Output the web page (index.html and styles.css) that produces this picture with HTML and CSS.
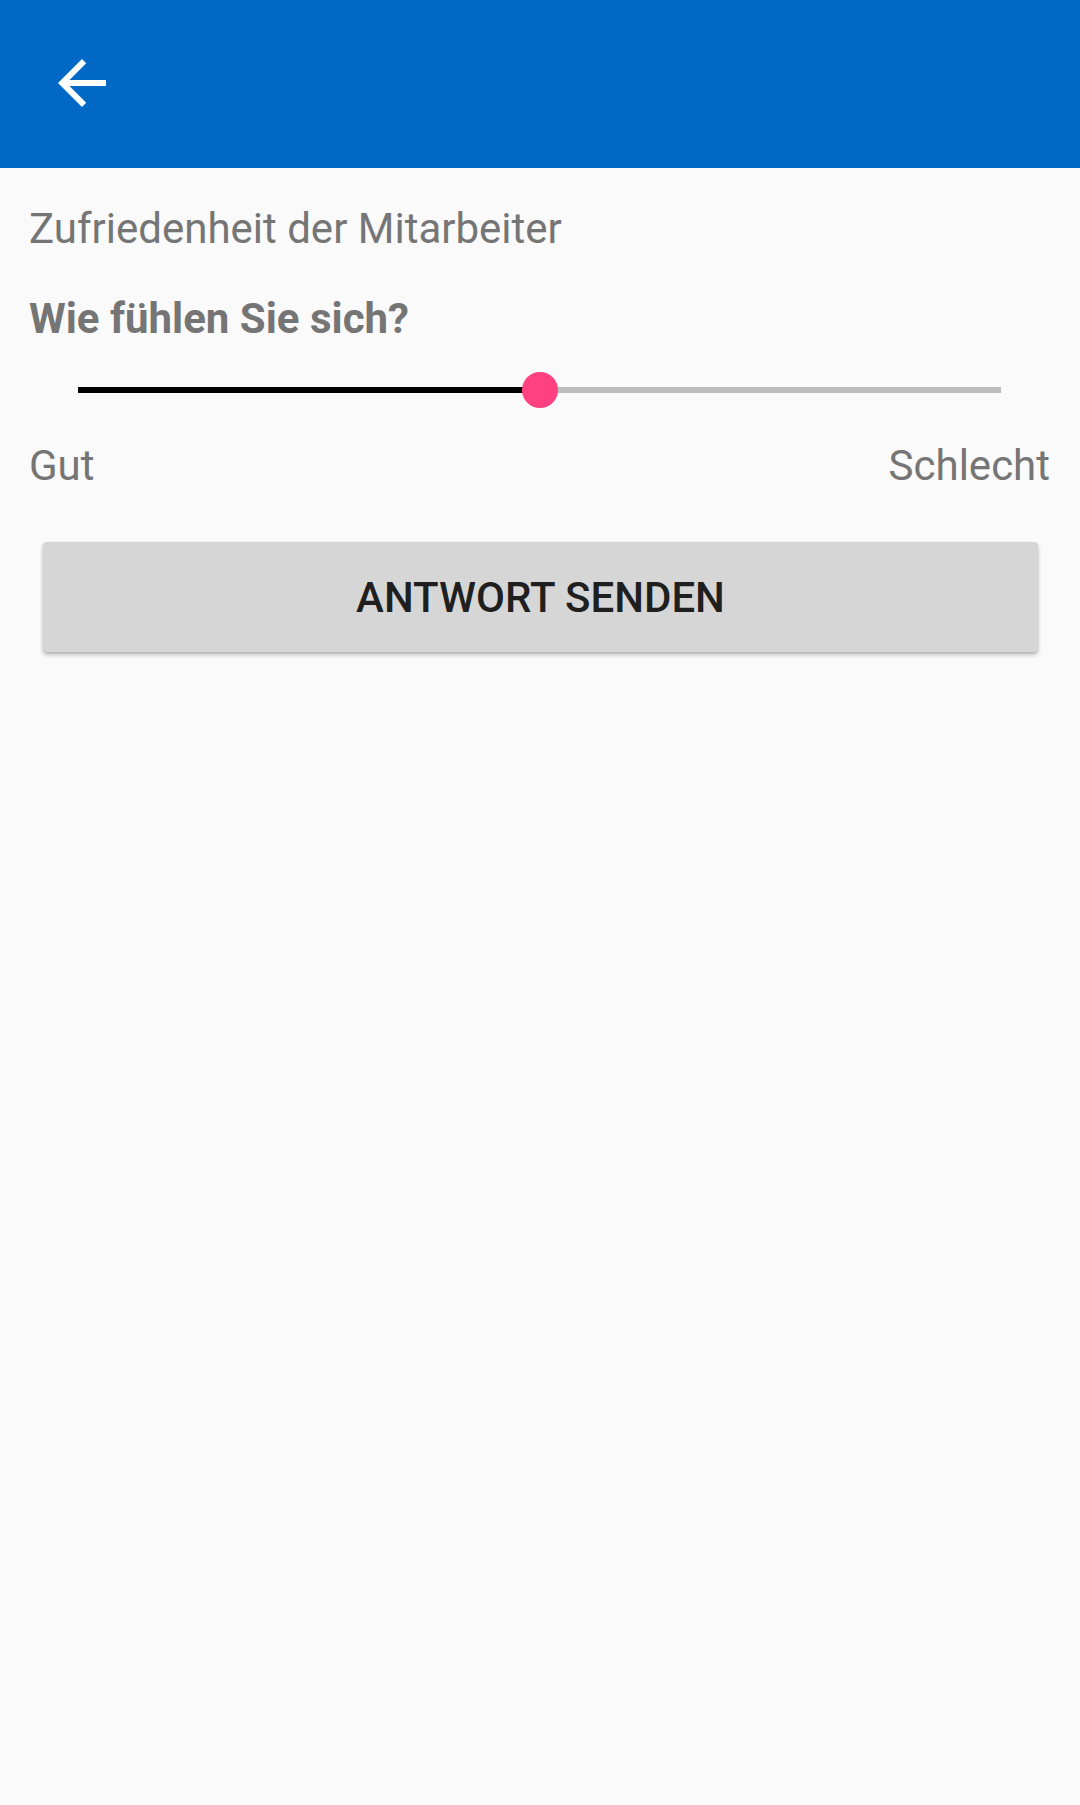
FILE: index.html
```html
<!DOCTYPE html>
<html lang="de">
<head>
<meta charset="utf-8">
<title>Zufriedenheit der Mitarbeiter</title>
<link rel="stylesheet" href="styles.css">
</head>
<body>
  <header class="appbar">
    <button class="back" aria-label="Zurück">
      <svg class="back-icon" viewBox="0 0 24 24" width="72" height="72" aria-hidden="true">
        <path d="M20 11H7.83l5.59-5.59L12 4l-8 8 8 8 1.41-1.41L7.83 13H20v-2z" fill="#ffffff"/>
      </svg>
    </button>
  </header>
  <main class="content">
    <h1 class="title">Zufriedenheit der Mitarbeiter</h1>
    <h2 class="question">Wie fühlen Sie sich?</h2>
    <div class="slider">
      <div class="track">
        <div class="track-fill" style="width: 50%"></div>
        <div class="thumb" style="left: 50%"></div>
      </div>
    </div>
    <div class="labels">
      <span class="label">Gut</span>
      <span class="label">Schlecht</span>
    </div>
    <div class="actions">
      <button class="submit">ANTWORT SENDEN</button>
    </div>
  </main>
</body>
</html>
```

FILE: styles.css
```css
* {
  box-sizing: border-box;
}

html, body {
  margin: 0;
  padding: 0;
}

body {
  width: 1080px;
  height: 1805px;
  background: #fafafa;
  font-family: Roboto, "Noto Sans", "Liberation Sans", sans-serif;
  overflow: hidden;
}

.appbar {
  height: 168px;
  background: #0069c5;
  display: flex;
  align-items: center;
  padding-left: 46px;
}

.back {
  border: 0;
  padding: 0;
  background: none;
  width: 72px;
  height: 72px;
  display: flex;
  margin-top: -3px;
}

.back-icon {
  display: block;
}

.content {
  padding: 33px 30px 0 29px;
  display: flex;
  flex-direction: column;
}

.title {
  margin: 0;
  font-size: 42px;
  line-height: 56px;
  font-weight: 400;
  color: #757575;
}

.question {
  margin: 34px 0 0;
  font-size: 42px;
  line-height: 56px;
  font-weight: 700;
  color: #757575;
}

.slider {
  margin-top: 19px;
  height: 48px;
  display: flex;
  align-items: center;
  padding: 0 49px;
}

.track {
  position: relative;
  flex: 1;
  height: 6px;
  background: #bdbdbd;
}

.track-fill {
  height: 100%;
  background: #000000;
}

.thumb {
  position: absolute;
  top: 50%;
  width: 36px;
  height: 36px;
  margin: -18px 0 0 -18px;
  border-radius: 50%;
  background: #ff4081;
}

.labels {
  margin-top: 24px;
  display: flex;
  justify-content: space-between;
  font-size: 42px;
  line-height: 56px;
  color: #757575;
}

.actions {
  margin-top: 48px;
  padding: 0 12px 0 14px;
}

.submit {
  display: block;
  width: 100%;
  height: 110px;
  border: 0;
  border-radius: 4px;
  background: #d6d6d6;
  box-shadow: 0 3px 4px rgba(0, 0, 0, 0.22), 0 1px 2px rgba(0, 0, 0, 0.12);
  font-family: Roboto, "Noto Sans", "Liberation Sans", sans-serif;
  font-size: 42px;
  font-weight: 500;
  color: #1f1f1f;
  letter-spacing: 0;
  padding: 0;
}
```
